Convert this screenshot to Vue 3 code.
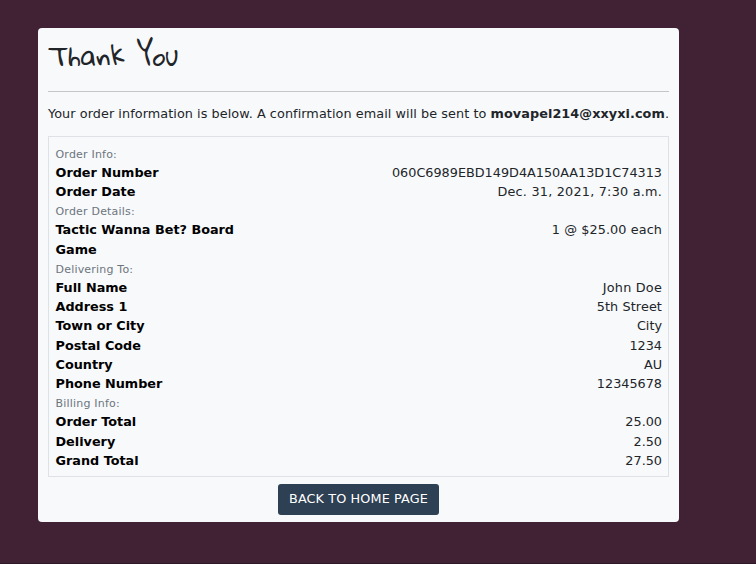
<script setup>
const sections = [
  {
    title: 'Order Info:',
    rows: [
      { label: 'Order Number', value: '060C6989EBD149D4A150AA13D1C74313', kind: 'code' },
      { label: 'Order Date', value: 'Dec. 31, 2021, 7:30 a.m.', kind: 'date' },
    ],
  },
  {
    title: 'Order Details:',
    rows: [{ label: 'Tactic Wanna Bet? Board Game', value: '1 @ $25.00 each', kind: 'text' }],
  },
  {
    title: 'Delivering To:',
    rows: [
      { label: 'Full Name', value: 'John Doe', kind: 'date' },
      { label: 'Address 1', value: '5th Street', kind: 'text' },
      { label: 'Town or City', value: 'City' },
      { label: 'Postal Code', value: '1234' },
      { label: 'Country', value: 'AU' },
      { label: 'Phone Number', value: '12345678' },
    ],
  },
  {
    title: 'Billing Info:',
    rows: [
      { label: 'Order Total', value: '25.00' },
      { label: 'Delivery', value: '2.50' },
      { label: 'Grand Total', value: '27.50' },
    ],
  },
]
</script>

<template>
  <main class="page">
    <section class="card">
      <h2 class="title">Thank You</h2>
      <hr class="rule" />
      <p class="intro">
        Your order information is below. A confirmation email will be sent to
        <strong>movapel214@xxyxi.com</strong>.
      </p>
      <div class="order">
        <div v-for="section in sections" :key="section.title">
          <div class="caption">{{ section.title }}</div>
          <div v-for="row in section.rows" :key="row.label" class="row">
            <div class="label">{{ row.label }}</div>
            <div class="value" :class="row.kind">{{ row.value }}</div>
          </div>
        </div>
      </div>
      <a class="button">BACK TO HOME PAGE</a>
    </section>
  </main>
</template>

<style>
body {
  background: #412234;
  overflow: hidden;
}
</style>

<style scoped>
.page {
  box-sizing: border-box;
  height: 564px;
  padding: 28px 77px 0 38px;
  border-bottom: 1px solid #2d1825;
  background: #412234;
  font-family: Verdana, "DejaVu Sans", sans-serif;
  font-size: 12.8px;
  line-height: 19.2px;
  color: #212529;
}
.card {
  box-sizing: border-box;
  display: flex;
  flex-direction: column;
  height: 494px;
  padding: 0 10px;
  border-radius: 4px;
  background: #f8f9fb;
}
.title {
  height: 63px;
  margin: 0;
  font-family: "Gloria Hallelujah", "Nothing You Could Do", "Open Sans", sans-serif;
  font-size: 25.6px;
  font-weight: 400;
  line-height: 55px;
  white-space: nowrap;
}
.rule {
  width: 100%;
  height: 1px;
  margin: 0;
  border: 0;
  background: #c3c5c8;
}
.intro {
  margin: 12px 0 13px;
  letter-spacing: 0.07px;
  white-space: nowrap;
}
.order {
  box-sizing: border-box;
  height: 341px;
  padding: 6.42px 6px 0 6.5px;
  border: 1px solid #dee2e6;
}
.caption {
  box-sizing: border-box;
  font-size: 11px;
  letter-spacing: 0.2px;
  color: #6c757d;
  height: 19.2px;
  padding-top: 1.1px;
}
.row {
  display: flex;
  justify-content: space-between;
}
.label {
  width: 195px;
  font-weight: 700;
  color: #000;
}
.value {
  white-space: nowrap;
}
.date {
  letter-spacing: 0.22px;
}
.text {
  letter-spacing: 0.1px;
}
.button {
  box-sizing: border-box;
  align-self: center;
  width: 161px;
  height: 31px;
  margin-top: 7px;
  border-radius: 3px;
  background: #2e4053;
  color: #fff;
  line-height: 30px;
  letter-spacing: 0.12px;
  text-align: center;
  white-space: nowrap;
}
</style>
